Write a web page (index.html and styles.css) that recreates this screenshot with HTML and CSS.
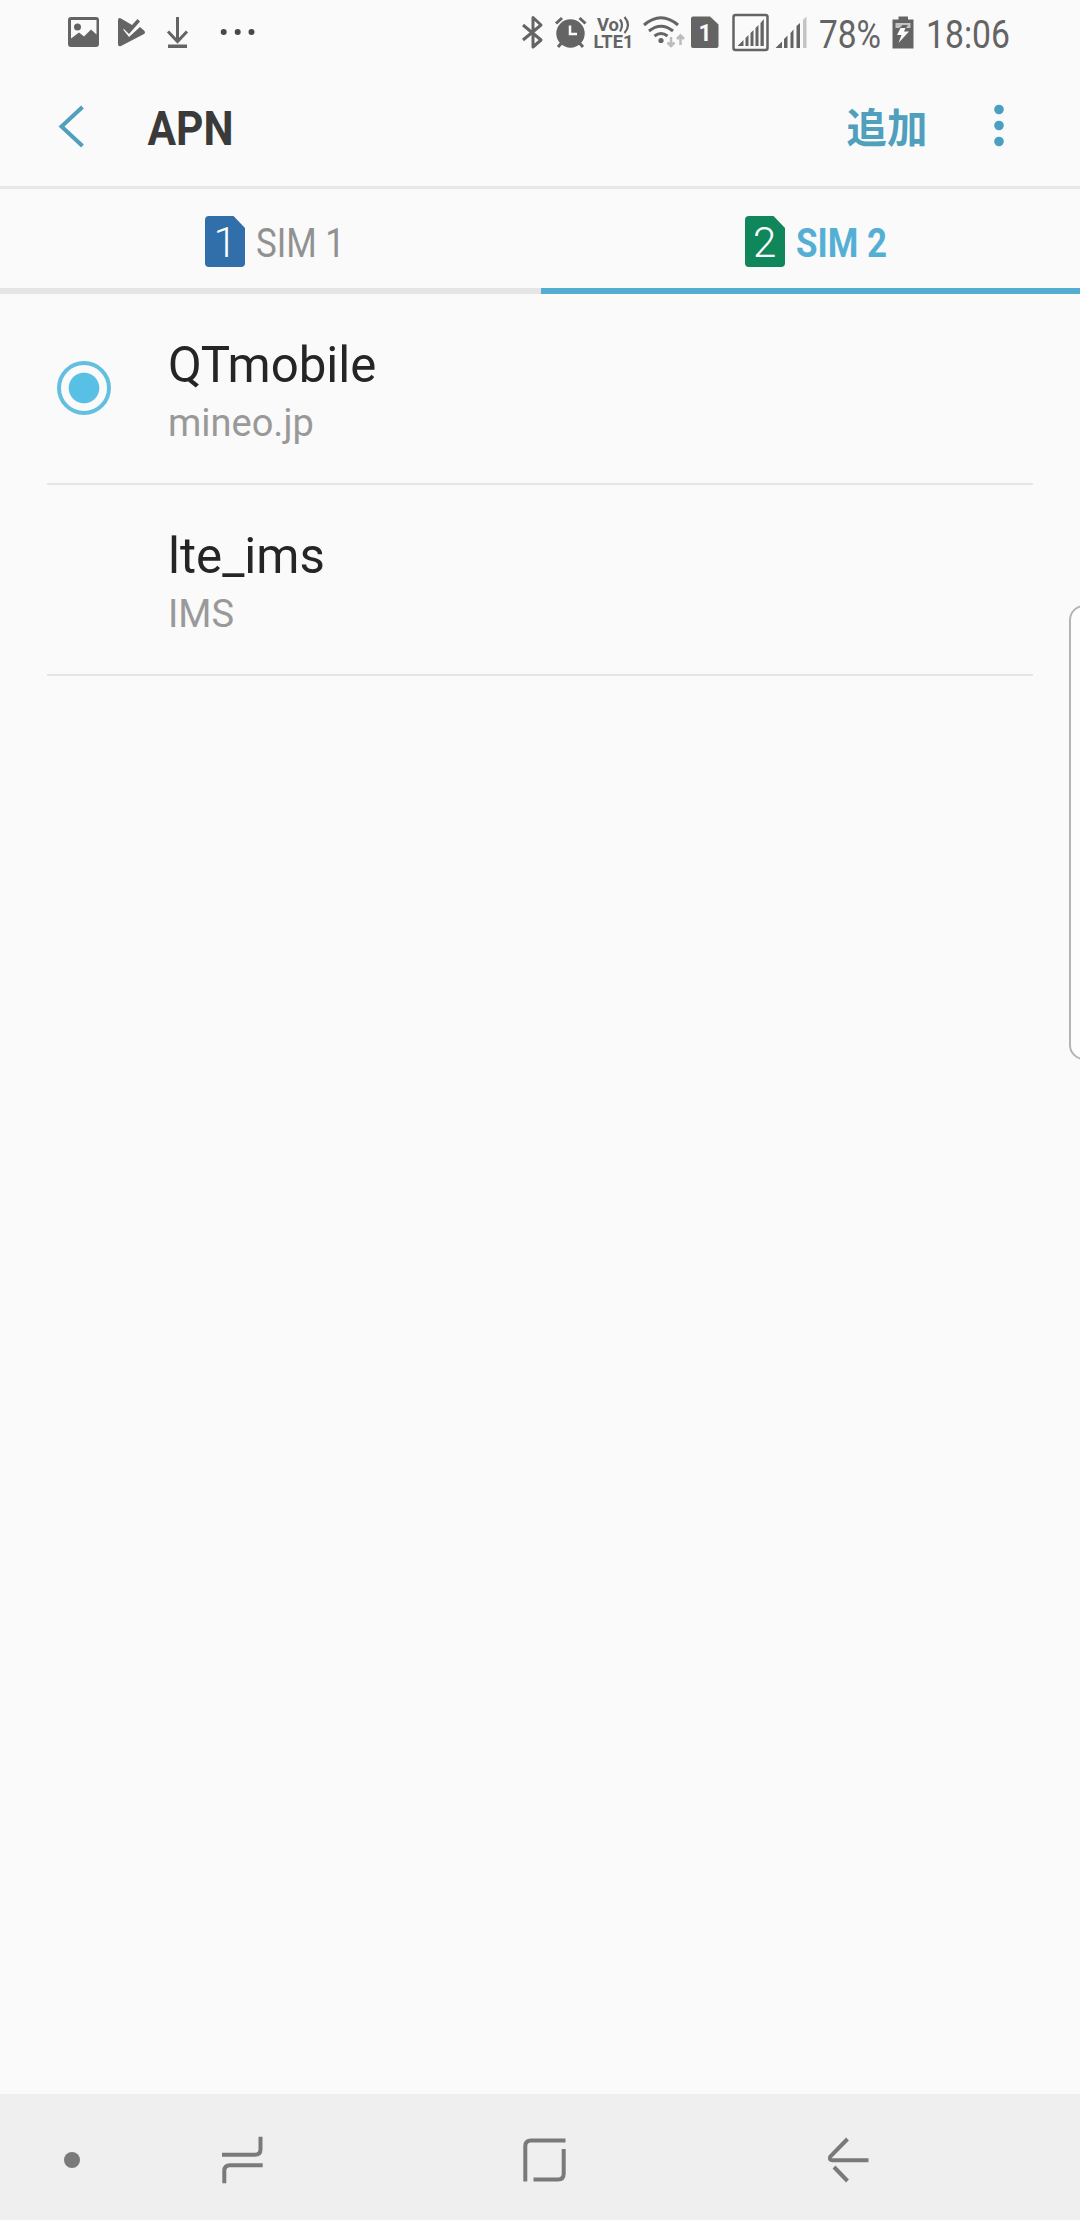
FILE: index.html
```html
<!DOCTYPE html>
<html lang="ja">
<head>
<meta charset="utf-8">
<title>APN</title>
<link rel="stylesheet" href="styles.css">
</head>
<body>
<div class="screen">
  <div class="status">
    <div class="status-left">
      <svg width="31" height="66" viewBox="68 0 31 66"><path fill-rule="evenodd" d="M71 17h25q3 0 3 3v24q0 3-3 3H71q-3 0-3-3V20q0-3 3-3zM71 20v18.500l8-6 5 4 7-7 5.500 5V20z"/><circle cx="77.500" cy="27" r="3.500"/></svg>
      <svg width="28" height="66" viewBox="118 0 28 66"><path d="M118 20.500Q118 17 121 18.500L132 25l5.500-6 2.500 2.500L129 34l-5.500-5.500V30l5.500 7 11-10 4 3.500q2 2 0 3.500L121 46q-3 1-3-2z"/></svg>
      <svg width="22" height="66" viewBox="167 0 22 66"><path class="stroke3" d="M177.500 17v24M168 31.500l9.500 10 9.500-10"/><path d="M168 44.500h19V48h-19z"/></svg>
      <svg width="36" height="66" viewBox="220 0 36 66"><g class="dark"><circle cx="223.700" cy="32" r="3"/><circle cx="237.700" cy="32" r="3"/><circle cx="251.500" cy="32" r="3"/></g></svg>
    </div>
    <div class="status-right">
      <svg width="22" height="66" viewBox="520 0 22 66"><path class="stroke3" stroke-linejoin="round" d="M522 25l18 15-8 7V17.500l8 7.500-18 15"/></svg>
      <svg width="32" height="66" viewBox="554.500 0 32 66"><circle cx="570" cy="33.500" r="14.200"/><path class="stroke3" d="M555.500 23.500l6-5.500M585 23.500l-6-5.500M561 43l-3.500 4M579 43l3.500 4"/><path class="light" d="M569.500 25.500V34h7"/></svg>
      <svg width="40" height="66" viewBox="592 0 40 66"><text class="tiny" x="596" y="30.500" textLength="22" lengthAdjust="spacingAndGlyphs">Vo</text><text class="tiny" x="592.500" y="48" textLength="40" lengthAdjust="spacingAndGlyphs">LTE1</text><path class="thin" d="M619 19.500q4 5.500 0 12M623.500 17q7 8 0 16"/></svg>
      <svg width="42" height="66" viewBox="642 0 42 66"><g class="wave"><path d="M643 25q17-14.500 34 0M648 31q12-9.500 24 0M653.500 36q6.500-5 13 0"/></g><circle cx="660" cy="40.500" r="2.600"/><path class="faint" d="M670 37v9m-3.500-3.500L670 46l3.500-3.500M679.500 45v-9.500M676 39l3.500-3.500L683 39"/></svg>
      <svg width="28" height="66" viewBox="690 0 28 66"><path d="M692 16.500h17l8.500 8V46q0 2-2 2H692q-2 0-2-2V18.500q0-2 2-2z"/><text class="slot" x="697.500" y="41">1</text></svg>
      <svg width="37" height="66" viewBox="731.500 0 37 66"><rect class="frame" x="733" y="15" width="34" height="35" rx="2"/><path d="M737 46l6-6v6zM745 38l3-3v11h-3zM750 33l3-3v16h-3zM755 28l3-3v21h-3zM760 23l3.300-4v27H760z"/></svg>
      <svg width="32" height="66" viewBox="774.500 0 32 66"><path d="M775 48l6.500-6.500V48zM783.500 39l3.500-3.500V48h-3.500zM790 33l3-3.500V48h-3zM796 26l3.500-3V48H796z"/><path class="pale" d="M802.500 20l3.500-3.500V48h-3.500z"/></svg>
      <svg width="62" height="66" viewBox="818 0 62 66"><text class="clock" x="818" y="48" textLength="62" lengthAdjust="spacingAndGlyphs">78%</text></svg>
      <svg width="22" height="66" viewBox="891.500 0 22 66"><path d="M898 19.500v-3h9.500v3h5.500v29h-21v-29z"/><path class="pale" d="M895 23h15v5h-15z"/><path d="M900 27l2-2h5.500l-2 3h-7z"/><path fill="#fafafa" d="M900 28h5l-1.500 3.500h5L898 43l3-8h-4.500z"/></svg>
      <svg width="84" height="66" viewBox="925 0 84 66"><text class="clock" x="925" y="48" textLength="84" lengthAdjust="spacingAndGlyphs">18:06</text></svg>
    </div>
  </div>

  <header class="appbar">
    <svg class="back" width="26" height="120" viewBox="59 66 26 120"><path d="M82.500 107L61.500 126.500l21 19.500"/></svg>
    <svg class="title" width="86" height="120" viewBox="147 66 86 120"><text x="147.500" y="145" textLength="86" lengthAdjust="spacingAndGlyphs">APN</text></svg>
    <span class="add">追加</span>
    <svg class="more" width="10" height="120" viewBox="993.500 66 10 120"><circle cx="998.500" cy="109.500" r="4.800"/><circle cx="998.500" cy="125.500" r="4.800"/><circle cx="998.500" cy="141.500" r="4.800"/></svg>
  </header>

  <nav class="tabs">
    <div class="tab">
      <svg width="138" height="99" viewBox="205 189 138 99"><path fill="#316fab" d="M209 216h24.500L245 228v35q0 4-4 4h-32q-4 0-4-4v-43q0-4 4-4z"/><text class="badge" x="213.500" y="256.500">1</text><text class="label" x="256" y="257" textLength="89" lengthAdjust="spacingAndGlyphs">SIM 1</text></svg>
    </div>
    <div class="tab active">
      <svg width="144" height="99" viewBox="744 189 144 99"><path fill="#10875a" d="M748 216h24.500L784 228v35q0 4-4 4h-32q-4 0-4-4v-43q0-4 4-4z"/><text class="badge" x="752" y="256.500">2</text><text class="label" x="795" y="257" textLength="91" lengthAdjust="spacingAndGlyphs">SIM 2</text></svg>
    </div>
  </nav>

  <main class="list">
    <div class="item">
      <div class="radio"></div>
      <div class="texts"><div class="name">QTmobile</div><div class="apn">mineo.jp</div></div>
    </div>
    <div class="item">
      <div class="texts"><div class="name">lte_ims</div><div class="apn">IMS</div></div>
    </div>
  </main>

  <div class="edge"></div>

  <footer class="navbar">
    <svg class="dot" width="16" height="126" viewBox="64 2094 16 126"><circle cx="72" cy="2160" r="8"/></svg>
    <svg class="recents" width="42" height="126" viewBox="222 2094 42 126"><path d="M222 2154.700h33q5.500 0 5.500-5.500v-12.500M262.700 2165.300H230q-5.700 0-5.700 5.700v12.300"/></svg>
    <svg class="home" width="43" height="126" viewBox="522.500 2094 43 126"><path d="M565 2140.500h-34.500q-5.700 0-5.700 5.700v35.300M563.200 2149v24.800q0 5.700-5.700 5.700H533"/></svg>
    <svg class="return" width="42" height="126" viewBox="826.500 2094 42 126"><path d="M847 2139l-17.200 17.500q-1.500 3.700 1.700 3.700H868M833.500 2167l13.500 14"/></svg>
  </footer>
</div>
</body>
</html>
```
FILE: styles.css
```css
* { box-sizing: border-box; }
body { margin: 0; background: #fafafa; font-family: Roboto, "Noto Sans CJK JP", sans-serif; }
svg { display: block; flex: none; overflow: visible; }
.screen { position: relative; width: 1080px; height: 2220px; display: flex; flex-direction: column; overflow: hidden; }

.status { height: 66px; display: flex; justify-content: space-between; padding: 0 70.500px 0 68px; fill: #646464; }
.status-left, .status-right { display: flex; }
.status-left { gap: 19px; }
.status-left svg:nth-child(3) { margin-left: 2px; }
.status-left svg:nth-child(4) { margin-left: 12px; }
.status-right svg:nth-child(2) { margin-left: 12.5px; }
.status-right svg:nth-child(3) { margin-left: 5.5px; }
.status-right svg:nth-child(4) { margin-left: 10px; }
.status-right svg:nth-child(5) { margin-left: 6px; }
.status-right svg:nth-child(6) { margin-left: 13.5px; }
.status-right svg:nth-child(7) { margin-left: 6px; }
.status-right svg:nth-child(8) { margin-left: 11.5px; }
.status-right svg:nth-child(9) { margin-left: 11.5px; }
.status-right svg:nth-child(10) { margin-left: 11.5px; }
.stroke3 { fill: none; stroke: #646464; stroke-width: 3; }
.dark { fill: #484848; }
.light { fill: none; stroke: #fafafa; stroke-width: 2.5; }
.thin { fill: none; stroke: #646464; stroke-width: 2.2; }
.wave { fill: none; stroke: #646464; stroke-width: 3; }
.faint { fill: none; stroke: #bcbcbc; stroke-width: 2.5; }
.frame { fill: none; stroke: #646464; stroke-width: 2.5; }
.pale { fill: #c4c4c4; }
.tiny { font-size: 18.5px; font-weight: 700; }
.slot { font-size: 23px; font-weight: 700; fill: #fafafa; }
.clock { font-size: 39.5px; }

.appbar { height: 123px; display: flex; border-bottom: 3px solid #e7e7e7; padding: 0 76.500px 0 59px; }
.back path { fill: none; stroke: #4f9fbd; stroke-width: 4; }
.title { margin-left: 62px; font-size: 49px; font-weight: 700; fill: #3a3a3a; }
.add { margin-left: auto; width: 81px; font: 700 40.5px/120px "Noto Sans CJK JP", sans-serif; color: #4f9fbd; white-space: nowrap; }
.more { margin-left: 66px; fill: #4b9fc0; }

.tabs { height: 105px; display: flex; }
.tab { flex: 1; height: 105px; padding-left: 205px; border-bottom: 6px solid #e5e5e5; fill: #919191; font-size: 40.5px; }
.tab.active { padding-left: 204px; border-color: #53add0; fill: #54afd4; font-weight: 700; }
.badge { font-size: 42px; font-weight: 300; fill: #fff; }

.list { flex: 1; padding: 0 47px; }
.item { height: 191px; display: flex; border-bottom: 2px solid #e5e5e5; }
.radio { width: 54px; height: 54px; margin: 67px -64px 0 10px; border: 4px solid #62bfe0; border-radius: 50%; background: radial-gradient(circle, #57c0e4 14.800px, transparent 15.800px); }
.texts { padding: 42px 0 0 121px; }
.name { font-size: 49.2px; line-height: 58px; color: #252525; }
.apn { font-size: 38px; line-height: 46px; margin-top: 6px; color: #999; }

.edge { position: absolute; left: 1069px; top: 605px; width: 30px; height: 455px; border: 2px solid #b4b4b4; border-radius: 15px; background: #fdfdfd; }

.navbar { height: 126px; display: flex; padding-left: 64px; background: #efefef; fill: #7a7a7a; }
.navbar path { fill: none; stroke: #7a7a7a; stroke-width: 4; }
.recents { margin-left: 142px; }
.home { margin-left: 258.500px; }
.return { margin-left: 261px; }
```
